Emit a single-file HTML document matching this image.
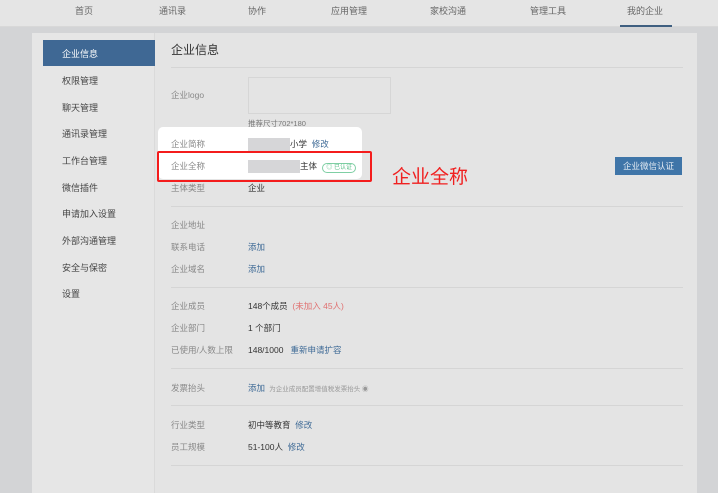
<!DOCTYPE html>
<html><head><meta charset="utf-8"><style>
*{margin:0;padding:0;box-sizing:border-box}
body{width:718px;height:478px;overflow:hidden;background:#d3d4d6;font-family:"Liberation Sans","Noto Sans CJK SC",sans-serif;font-size:9px;color:#333;position:relative}
.a{position:absolute;white-space:nowrap}
.nav{position:absolute;left:0;top:0;width:718px;height:27px;background:#e5e5e5;border-bottom:1px solid #d8d8d8}
.nav span{position:absolute;top:4px;font-size:9px;color:#666}
.panel{position:absolute;left:32px;top:33px;width:665px;height:460px;background:#e4e4e4}
.side{position:absolute;left:32px;top:33px;width:123px;height:460px;background:#e6e6e6;border-right:1px solid #dadada}
.si{position:absolute;left:62px;font-size:9px;color:#444}
.lab{position:absolute;left:171px;color:#888;font-size:8.5px}
.val{position:absolute;left:248px;color:#333;font-size:8.5px}
.lnk{color:#3e6a96}
.hr{position:absolute;left:171px;width:512px;height:1px;background:#d5d5d5}
.blur{display:inline-block;width:42px;height:13px;background:#d6d6d8;vertical-align:middle}
</style></head><body>
<div class="nav">
<span style="left:75px">首页</span><span style="left:159px">通讯录</span><span style="left:248px">协作</span><span style="left:331px">应用管理</span><span style="left:430px">家校沟通</span><span style="left:530px">管理工具</span><span style="left:627px">我的企业</span>
<div class="a" style="left:620px;top:25px;width:52px;height:2px;background:#3f5f80"></div>
</div>
<div class="panel"></div>
<div class="side"></div>
<div class="a" style="left:43px;top:40px;width:112px;height:26px;background:#3f6894"></div>
<div class="si" style="top:47px;color:#fff">企业信息</div>
<div class="si" style="top:74px">权限管理</div>
<div class="si" style="top:101px">聊天管理</div>
<div class="si" style="top:127px">通讯录管理</div>
<div class="si" style="top:154px">工作台管理</div>
<div class="si" style="top:181px">微信插件</div>
<div class="si" style="top:207px">申请加入设置</div>
<div class="si" style="top:234px">外部沟通管理</div>
<div class="si" style="top:261px">安全与保密</div>
<div class="si" style="top:287px">设置</div>
<div class="a" style="left:171px;top:41px;font-size:12px;color:#333">企业信息</div>
<div class="hr" style="top:67px"></div>
<div class="lab" style="top:89px">企业logo</div>
<div class="a" style="left:248px;top:77px;width:143px;height:37px;border:1px solid #d6d6d6"></div>
<div class="a" style="left:248px;top:118px;font-size:7.5px;color:#777">推荐尺寸702*180</div>
<div class="a" style="left:158px;top:127px;width:204px;height:52px;background:#fff;border-radius:5px"></div>
<div class="lab" style="top:138px">企业简称</div>
<div class="val" style="top:138px"><span class="blur"></span>小学 <span class="lnk">&nbsp;修改</span></div>
<div class="lab" style="top:160px">企业全称</div>
<div class="val" style="top:160px"><span class="blur" style="width:52px"></span>主体 <span style="display:inline-block;border:1px solid #7fcfa4;color:#5bbf88;border-radius:6px;font-size:6px;padding:0 3px;line-height:8px;margin-left:3px">◎ 已认证</span></div>
<div class="a" style="left:157px;top:151px;width:215px;height:31px;border:2px solid #f41c1c;border-radius:2px"></div>
<div class="a" style="left:392px;top:162px;font-size:19px;color:#f02020">企业全称</div>
<div class="a" style="left:615px;top:157px;width:67px;height:18px;background:#3f75a8;color:#e6edf4;font-size:8.5px;text-align:center;line-height:18px">企业微信认证</div>
<div class="lab" style="top:182px">主体类型</div>
<div class="val" style="top:182px">企业</div>
<div class="hr" style="top:206px"></div>
<div class="lab" style="top:219px">企业地址</div>
<div class="lab" style="top:241px">联系电话</div><div class="val lnk" style="top:241px">添加</div>
<div class="lab" style="top:263px">企业域名</div><div class="val lnk" style="top:263px">添加</div>
<div class="hr" style="top:287px"></div>
<div class="lab" style="top:300px">企业成员</div><div class="val" style="top:300px">148个成员 <span style="color:#e07070">&nbsp;(未加入 45人)</span></div>
<div class="lab" style="top:322px">企业部门</div><div class="val" style="top:322px">1 个部门</div>
<div class="lab" style="top:344px">已使用/人数上限</div><div class="val" style="top:344px">148/1000 <span class="lnk">&nbsp;&nbsp;重新申请扩容</span></div>
<div class="hr" style="top:368px"></div>
<div class="lab" style="top:382px">发票抬头</div><div class="val" style="top:382px"><span class="lnk">添加</span> <span style="font-size:6.5px;color:#999">&nbsp;为企业成员配置增值税发票抬头 ◉</span></div>
<div class="hr" style="top:405px"></div>
<div class="lab" style="top:419px">行业类型</div><div class="val" style="top:419px">初中等教育 <span class="lnk">&nbsp;修改</span></div>
<div class="lab" style="top:441px">员工规模</div><div class="val" style="top:441px">51-100人 <span class="lnk">&nbsp;修改</span></div>
<div class="hr" style="top:465px"></div>
</body></html>
